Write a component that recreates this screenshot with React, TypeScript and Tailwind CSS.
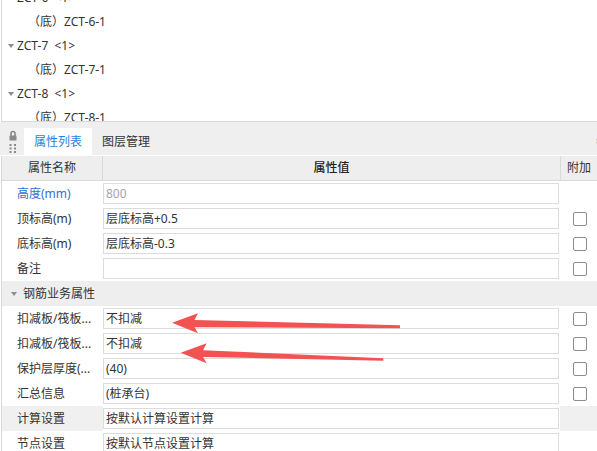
import React from "react";

type Row =
  | { kind: "group"; name: string }
  | {
      kind: "row";
      name: string;
      value: string;
      blue?: boolean;
      grayValue?: boolean;
      cb?: boolean;
      shade?: boolean;
    };

const rows: Row[] = [
  { kind: "row", name: "高度(mm)", value: "800", blue: true, grayValue: true },
  { kind: "row", name: "顶标高(m)", value: "层底标高+0.5", cb: true },
  { kind: "row", name: "底标高(m)", value: "层底标高-0.3", cb: true },
  { kind: "row", name: "备注", value: "", cb: true },
  { kind: "group", name: "钢筋业务属性" },
  { kind: "row", name: "扣减板/筏板...", value: "不扣减", cb: true },
  { kind: "row", name: "扣减板/筏板...", value: "不扣减", cb: true },
  { kind: "row", name: "保护层厚度(...", value: "(40)", cb: true },
  { kind: "row", name: "汇总信息", value: "(桩承台)", cb: true },
  { kind: "row", name: "计算设置", value: "按默认计算设置计算", shade: true },
  { kind: "row", name: "节点设置", value: "按默认节点设置计算" },
];

const tree = [
  { level: 1, text: "ZCT-6  <1>" },
  { level: 2, text: "（底）ZCT-6-1" },
  { level: 1, text: "ZCT-7  <1>" },
  { level: 2, text: "（底）ZCT-7-1" },
  { level: 1, text: "ZCT-8  <1>" },
  { level: 2, text: "（底）ZCT-8-1" },
];

function Caret({ className }: { className?: string }) {
  return (
    <svg width="6" height="4" viewBox="0 0 6 4" className={className}>
      <polygon points="0,0 6,0 3,4" fill="#8c8c8c" />
    </svg>
  );
}

function LockGrip() {
  return (
    <svg width="10" height="26" viewBox="0 0 10 26" className="mt-[-1px]">
      <path d="M3 8 V5.5 a2 2 0 0 1 4 0 V8" fill="none" stroke="#8a8a8a" strokeWidth="1.6" />
      <rect x="1.5" y="7.5" width="7" height="5" rx="0.5" fill="#8a8a8a" />
      <rect x="1.5" y="16" width="2" height="2" fill="#8a8a8a" />
      <rect x="6" y="16" width="2" height="2" fill="#8a8a8a" />
      <rect x="1.5" y="19.5" width="2" height="2" fill="#8a8a8a" />
      <rect x="6" y="19.5" width="2" height="2" fill="#8a8a8a" />
      <rect x="1.5" y="23" width="2" height="2" fill="#8a8a8a" />
      <rect x="6" y="23" width="2" height="2" fill="#8a8a8a" />
    </svg>
  );
}

export default function App() {
  return (
    <div
      className="relative w-[597px] h-[451px] overflow-hidden bg-white text-[12px] text-[#333]"
      style={{ fontFamily: '"Noto Sans", "Noto Sans CJK SC", sans-serif' }}
    >
      {/* Tree */}
      <div className="ml-px h-[122px] overflow-hidden border-l border-b border-[#d9d9d9]">
        <div className="mt-[-14px]">
          {tree.map((t, i) => (
            <div key={i} className="flex h-[24px] items-center whitespace-pre leading-[24px]">
              {t.level === 1 ? (
                <>
                  <Caret className="ml-[6px] mr-[3px]" />
                  <span>{t.text}</span>
                </>
              ) : (
                <span className="pl-[26px]">{t.text}</span>
              )}
            </div>
          ))}
        </div>
      </div>

      {/* Tab bar */}
      <div className="flex h-[33px] items-end bg-[#efefef] pt-[5px]">
        <div className="flex h-full w-[24px] items-start justify-center pl-[1px] pt-[2px]">
          <LockGrip />
        </div>
        <div className="flex h-[27px] items-center bg-white px-[10px] text-[#2f7de1]">属性列表</div>
        <div className="flex h-[27px] items-center px-[10px] text-[#333]">图层管理</div>
        <div className="ml-auto mr-[-4px] flex h-[27px] items-center text-[10px] text-[#aaa]">×</div>
      </div>
      <div className="h-px bg-white" />

      {/* Header */}
      <div className="ml-px flex h-[25px] border-l border-b border-[#d9d9d9] bg-[#eeeeee]">
        <div className="flex w-[101px] items-center justify-center border-r border-[#d9d9d9]">属性名称</div>
        <div className="flex w-[458px] items-center justify-center border-r border-[#d9d9d9] font-medium text-[#222]">属性值</div>
        <div className="flex flex-1 items-center justify-center">附加</div>
      </div>

      {/* Rows */}
      <div className="ml-px border-l border-[#d9d9d9]">
        {rows.map((r, i) =>
          r.kind === "group" ? (
            <div key={i} className="flex h-[25px] items-center bg-[#eeeeee]">
              <Caret className="ml-[9px] mr-[6px]" />
              <span>{r.name}</span>
            </div>
          ) : (
            <div key={i} className="flex h-[25px]">
              <div
                className={`flex w-[101px] items-center pl-[15px] ${r.shade ? "bg-[#f0f0f0]" : ""} ${
                  r.blue ? "text-[#2f6fd6]" : ""
                }`}
              >
                {r.name}
              </div>
              <div className="flex w-[457px] items-center">
                <div
                  className={`flex h-[21px] w-[456px] items-center border border-[#dcdcdc] bg-white pl-[2px] ${
                    r.grayValue ? "text-[#a6a6a6]" : ""
                  }`}
                >
                  {r.value}
                </div>
              </div>
              <div className={`flex flex-1 items-center justify-center pl-[2px] ${r.shade ? "bg-[#f0f0f0]" : ""}`}>
                {r.cb && <div className="h-[14px] w-[14px] rounded-[2px] border border-[#8c8c8c] bg-white" />}
              </div>
            </div>
          )
        )}
      </div>

      {/* Annotation arrows */}
      <svg className="pointer-events-none absolute left-0 top-0" width="597" height="451" viewBox="0 0 597 451">
        <polygon
          points="172,322.7 198,313.3 194.5,320 400,325.3 400,328.2 194.5,327.3 198,333.3"
          fill="#f25252"
        />
        <polygon
          points="180.7,352.7 206.7,343.3 203,350.2 383.3,358.3 383.3,360.7 203,357 206.7,363.3"
          fill="#f25252"
        />
      </svg>
    </div>
  );
}
